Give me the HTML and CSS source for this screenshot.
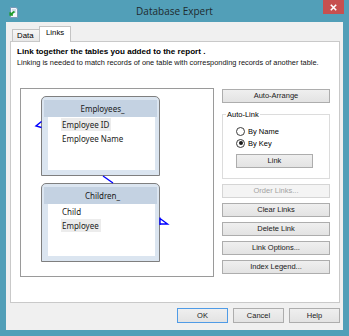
FILE: index.html
```html
<!DOCTYPE html>
<html>
<head>
<meta charset="utf-8">
<link rel="stylesheet" href="styles.css">
</head>
<body>
<div class="window">
  <div class="titlebar">
    <div class="tb-left">
      <svg class="app-icon" width="10" height="11" viewBox="0 0 10 11">
        <path d="M2.5 0.5 H8 L9.5 2 V10.5 H2.5 Z" fill="#f4f8fc" stroke="#7c98b8" stroke-width="1"/>
        <path d="M4 3 H8 M4 5 H8" stroke="#9cb4cc" stroke-width="0.8"/>
        <path d="M6.5 4.5 L2.5 7.5 M2.2 5.2 V8 H5" fill="none" stroke="#1f9a2a" stroke-width="1.6"/>
      </svg>
    </div>
    <div class="title">Database Expert</div>
    <div class="tb-right">
      <div class="close">
        <svg width="7" height="7" viewBox="0 0 7 7"><path d="M0.8 0.8 L6.2 6.2 M6.2 0.8 L0.8 6.2" stroke="#fff" stroke-width="1.6"/></svg>
      </div>
    </div>
  </div>
  <div class="client">
    <div class="tabs">
      <div class="tab">Data</div>
      <div class="tab active">Links</div>
    </div>
    <div class="panel">
      <div class="intro">
        <div class="intro-title">Link together the tables you added to the report .</div>
        <div class="intro-text">Linking is needed to match records of one table with corresponding records of another table.</div>
      </div>
      <div class="main">
        <div class="diagram">
          <div class="dtable t-emp">
            <div class="thead">Employees_</div>
            <div class="tbody">
              <div class="field"><span class="sel">Employee ID</span></div>
              <div class="field"><span class="fname">Employee Name</span></div>
            </div>
          </div>
          <div class="dtable t-child">
            <div class="thead">Children_</div>
            <div class="tbody">
              <div class="field"><span class="fname">Child</span></div>
              <div class="field"><span class="sel">Employee</span></div>
            </div>
          </div>
          <svg class="links" width="193" height="187" viewBox="0 0 193 187">
            <path d="M20.5 32.5 L15 37 L20.5 38.5" fill="none" stroke="#0000ff" stroke-width="1.4"/>
            <path d="M82 87 L92 94" fill="none" stroke="#0000ff" stroke-width="1.4"/>
            <path d="M139 128.5 L139 136 M139 129.5 L146.5 135 L139 135" fill="none" stroke="#0000ff" stroke-width="1.4"/>
          </svg>
        </div>
        <div class="side">
          <div class="btn first">Auto-Arrange</div>
          <div class="group">
            <div class="group-label">Auto-Link</div>
            <div class="radios">
              <div class="radio-row"><span class="radio"></span><span>By Name</span></div>
              <div class="radio-row"><span class="radio checked"></span><span>By Key</span></div>
            </div>
            <div class="btn link-btn">Link</div>
          </div>
          <div class="btn disabled order">Order Links...</div>
          <div class="btn">Clear Links</div>
          <div class="btn">Delete Link</div>
          <div class="btn">Link Options...</div>
          <div class="btn">Index Legend...</div>
        </div>
      </div>
    </div>
    <div class="footer">
      <div class="btn fbtn default">OK</div>
      <div class="btn fbtn">Cancel</div>
      <div class="btn fbtn">Help</div>
    </div>
  </div>
</div>
</body>
</html>
```

FILE: styles.css
```css
html, body {
  margin: 0;
  padding: 0;
}
body {
  width: 349px;
  height: 336px;
  overflow: hidden;
  background: #529fb8;
  font-family: "Liberation Sans", Arial, sans-serif;
  color: #000;
}
.window {
  width: 349px;
  height: 336px;
  display: flex;
  flex-direction: column;
}
.titlebar {
  height: 22px;
  display: grid;
  grid-template-columns: 1fr auto 1fr;
  flex: none;
}
.tb-left {
  display: flex;
  align-items: flex-start;
}
.app-icon {
  margin: 7px 0 0 8px;
}
.title {
  font-family: "Open Sans", "Noto Sans", sans-serif;
  font-size: 10px;
  line-height: 22px;
  color: #1e2a2e;
}
.tb-right {
  display: flex;
  justify-content: flex-end;
  align-items: flex-start;
}
.close {
  width: 21px;
  height: 14px;
  margin-right: 5px;
  background: #c7504f;
  display: flex;
  align-items: center;
  justify-content: center;
}
.client {
  flex: 1;
  margin: 0 6px 6px 6px;
  background: #f0f0f0;
  padding: 4px 3px 0 4px;
  display: flex;
  flex-direction: column;
  box-sizing: border-box;
}
.tabs {
  height: 15px;
  display: flex;
  align-items: flex-end;
  padding-left: 2px;
  flex: none;
}
.tab {
  box-sizing: border-box;
  height: 12px;
  width: 28px;
  border: 1px solid #c4c4c4;
  border-bottom: none;
  background: linear-gradient(#f6f6f6, #e8e8e8);
  font-size: 7.8px;
  line-height: 11px;
  padding-left: 4px;
}
.tab.active {
  height: 16px;
  width: 32px;
  margin-left: -1px;
  margin-bottom: -1px;
  background: #fff;
  position: relative;
  z-index: 1;
  line-height: 12px;
  padding-left: 6px;
}
.panel {
  height: 262px;
  box-sizing: border-box;
  border: 1px solid #c9c9c9;
  background: #fff;
  flex: none;
}
.intro {
  padding: 5px 6px 0 6px;
}
.intro-title {
  font-weight: bold;
  font-size: 8.1px;
  line-height: 10px;
}
.intro-text {
  margin-top: 1px;
  font-size: 7.4px;
  line-height: 9px;
  color: #111;
}
.main {
  display: flex;
  margin-top: 21px;
  padding: 0 9px;
  gap: 8px;
}
.diagram {
  position: relative;
  width: 194px;
  height: 189px;
  box-sizing: border-box;
  border: 1px solid #9a9a9a;
  background: #fff;
  flex: none;
}
.dtable {
  position: absolute;
  left: 20px;
  width: 119px;
  height: 80px;
  box-sizing: border-box;
  border: 1px solid #7f7f7f;
  border-radius: 5px 5px 0 0;
  background: #dbe5f0;
  padding: 3px 4px 5px 6px;
  display: flex;
  flex-direction: column;
}
.t-emp {
  top: 7px;
}
.t-child {
  top: 94px;
  height: 79px;
}
.thead {
  height: 17px;
  background: #c4d2e2;
  margin: 0 -2px 0 -4px;
  padding-left: 4px;
  font-family: "Noto Sans", "Open Sans", sans-serif;
  font-size: 8px;
  line-height: 17px;
  text-align: center;
  color: #1a1a1a;
  flex: none;
}
.tbody {
  flex: 1;
  background: #fff;
  padding-top: 1px;
}
.field {
  height: 14px;
  padding-left: 13px;
  font-family: "Noto Sans", "Open Sans", sans-serif;
  font-size: 8px;
  line-height: 13px;
  color: #1a1a1a;
}
.sel, .fname {
  display: inline-block;
  padding: 0 2px 0 1px;
}
.sel {
  background: #ececec;
}
.links {
  position: absolute;
  left: 0;
  top: 0;
}
.side {
  width: 108px;
  display: flex;
  flex-direction: column;
  flex: none;
}
.btn {
  box-sizing: border-box;
  height: 14px;
  border: 1px solid #adadad;
  background: linear-gradient(#efefef, #e3e3e3);
  font-size: 7.5px;
  line-height: 12px;
  text-align: center;
  color: #1a1a1a;
  flex: none;
}
.side .btn + .btn {
  margin-top: 5px;
}
.btn.first {
  margin-top: 1px;
}
.btn.order {
  margin-top: 5px;
}
.btn.disabled {
  color: #a3a3a3;
  border-color: #d5d5d5;
  background: #f4f4f4;
}
.group {
  margin-top: 11px;
  border: 1px solid #dcdcdc;
  height: 65px;
  box-sizing: border-box;
  display: flex;
  flex-direction: column;
}
.group-label {
  width: fit-content;
  margin: -6px 0 0 3px;
  padding: 0 1px;
  background: #fff;
  font-size: 7.5px;
  line-height: 11px;
  height: 11px;
}
.radios {
  margin-top: 5px;
}
.radio-row {
  height: 12px;
  display: flex;
  align-items: center;
  gap: 3px;
  padding-left: 13px;
  font-size: 7.5px;
}
.radio {
  width: 9px;
  height: 9px;
  box-sizing: border-box;
  border: 1px solid #3c3c3c;
  border-radius: 50%;
  background: #fff;
  display: flex;
  align-items: center;
  justify-content: center;
}
.radio.checked::after {
  content: "";
  width: 4px;
  height: 4px;
  border-radius: 50%;
  background: #1a1a1a;
}
.link-btn {
  margin: 5px 0 0 13px;
  width: 77px;
}
.footer {
  display: flex;
  justify-content: flex-end;
  gap: 5px;
  margin-top: 5px;
}
.fbtn {
  width: 51px;
  height: 15px;
  line-height: 13px;
}
.fbtn.default {
  border-color: #4f9be6;
}
```
